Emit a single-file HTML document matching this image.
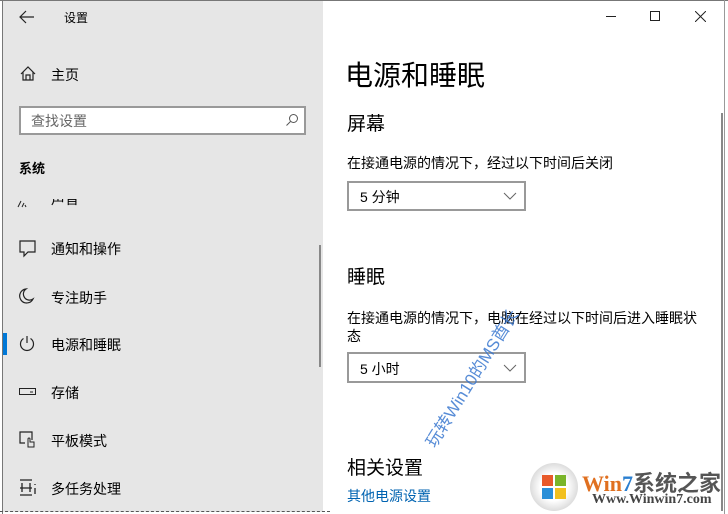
<!DOCTYPE html>
<html><head><meta charset="utf-8"><style>
*{margin:0;padding:0;box-sizing:border-box}
body{width:728px;height:514px;background:#fff;position:relative;overflow:hidden;font-family:"Liberation Sans","Noto Sans CJK SC","Microsoft YaHei",sans-serif;color:#000}
.a{position:absolute;white-space:nowrap}
#left{left:3px;top:1px;width:320px;height:511px;background:#e6e6e6}
.it{font-size:14px}
svg{position:absolute}
</style></head><body>
<div class="a" style="left:0;top:0;width:728px;height:1px;background:#777"></div>
<div class="a" style="left:2px;top:0;width:1px;height:514px;background:#777"></div>
<div class="a" style="left:724px;top:0;width:1px;height:514px;background:#999"></div>
<div class="a" id="left"></div>
<div class="a" style="left:0;top:511px;width:330px;height:3px;border-top:1px dashed #555"></div>

<svg style="left:19px;top:10px" width="16" height="14"><path d="M1 7H15M7 1L1 7L7 13" fill="none" stroke="#222" stroke-width="1.2"/></svg>
<div class="a" style="left:64px;top:9px;font-size:12px">设置</div>

<svg style="left:20px;top:66px" width="16" height="15"><path d="M1 8L8 1L15 8M3 6V14H13V6M6 14V9H10V14" fill="none" stroke="#222" stroke-width="1.2"/></svg>
<div class="a it" style="left:51px;top:65px">主页</div>

<div class="a" style="left:19px;top:106px;width:287px;height:29px;border:2px solid #999;background:#fff"></div>
<div class="a" style="left:31px;top:111px;font-size:14px;color:#666">查找设置</div>
<svg style="left:285px;top:113px" width="14" height="14"><circle cx="8.5" cy="5.5" r="4" fill="none" stroke="#555"/><path d="M5.5 8.5L1.5 12.5" stroke="#555"/></svg>

<div class="a" style="left:19px;top:158px;font-size:13px;font-weight:bold">系统</div>
<div class="a" style="left:17px;top:199px;height:9px;overflow:hidden;width:100px"><svg style="left:0;top:0" width="14" height="9"><path d="M1 8L4 2M5 8L7 4M9 8L8 6" stroke="#222"/></svg><div style="position:absolute;left:34px;top:-10px;font-size:14px">声音</div></div>

<svg style="left:19px;top:240px" width="18" height="18"><path d="M1 1H16V12H9L5 16V12H1Z" fill="none" stroke="#222" stroke-width="1.2"/></svg>
<div class="a it" style="left:51px;top:239px">通知和操作</div>

<svg style="left:19px;top:288px" width="16" height="16"><path d="M7 1A7 7 0 1 0 14 11A6 6 0 0 1 7 1Z" fill="none" stroke="#222" stroke-width="1.2"/></svg>
<div class="a it" style="left:51px;top:288px">专注助手</div>

<div class="a" style="left:3px;top:333px;width:4px;height:22px;background:#0078d7"></div>
<svg style="left:19px;top:335px" width="16" height="17"><path d="M4.5 3.5A6.5 6.5 0 1 0 11.5 3.5M8 1V8" fill="none" stroke="#222" stroke-width="1.2"/></svg>
<div class="a it" style="left:51px;top:335px">电源和睡眠</div>

<svg style="left:19px;top:388px" width="18" height="8"><rect x="0.5" y="0.5" width="16" height="6" fill="none" stroke="#222"/><path d="M11 4H14" stroke="#222"/></svg>
<div class="a it" style="left:51px;top:383px">存储</div>

<svg style="left:19px;top:431px" width="18" height="18"><path d="M13 9V1H1V12H6" fill="none" stroke="#222" stroke-width="1.2"/><path d="M9 16V8A1 1 0 0 1 11 8V11H15V16Z" fill="none" stroke="#222"/></svg>
<div class="a it" style="left:51px;top:431px">平板模式</div>

<svg style="left:19px;top:479px" width="18" height="18"><path d="M1 1H13M1 16H13M3 4V13M11 4V13M1 9H13M16 5V6M16 9V15" fill="none" stroke="#222" stroke-width="1.3"/></svg>
<div class="a it" style="left:51px;top:479px">多任务处理</div>

<div class="a" style="left:319px;top:245px;width:2px;height:122px;background:#888"></div>

<div class="a" style="left:606px;top:16px;width:10px;height:1px;background:#222"></div>
<div class="a" style="left:650px;top:11px;width:10px;height:10px;border:1px solid #222"></div>
<svg style="left:695px;top:11px" width="11" height="11"><path d="M0 0L11 11M11 0L0 11" stroke="#222"/></svg>

<div class="a" style="left:721px;top:113px;width:2px;height:398px;background:#888"></div>

<div class="a" style="left:345px;top:54px;font-size:28px">电源和睡眠</div>
<div class="a" style="left:347px;top:109px;font-size:19px">屏幕</div>
<div class="a" style="left:347px;top:153px;font-size:14px">在接通电源的情况下，经过以下时间后关闭</div>
<div class="a" style="left:347px;top:181px;width:179px;height:30px;border:2px solid #999"></div>
<div class="a" style="left:360px;top:187px;font-size:14px">5 分钟</div>
<svg style="left:503px;top:192px" width="14" height="8"><path d="M1 1L7 7L13 1" fill="none" stroke="#666"/></svg>

<div class="a" style="left:347px;top:262px;font-size:19px">睡眠</div>
<div class="a" style="left:347px;top:308px;font-size:14px">在接通电源的情况下，电脑在经过以下时间后进入睡眠状</div>
<div class="a" style="left:347px;top:326px;font-size:14px">态</div>
<div class="a" style="left:347px;top:352px;width:179px;height:31px;border:2px solid #999"></div>
<div class="a" style="left:360px;top:359px;font-size:14px">5 小时</div>
<svg style="left:503px;top:364px" width="14" height="8"><path d="M1 1L7 7L13 1" fill="none" stroke="#666"/></svg>

<div class="a" style="left:418px;top:438px;font-size:17px;color:#3a78d0;opacity:.85;transform:rotate(-58deg);transform-origin:0 0">玩转Win10的MS酋长</div>

<div class="a" style="left:347px;top:453px;font-size:19px">相关设置</div>
<div class="a" style="left:347px;top:486px;font-size:14px;color:#0063b1">其他电源设置</div>

<div class="a" style="left:530px;top:463px;width:48px;height:48px;border-radius:50%;background:radial-gradient(circle,#fff 40%,#ddd 70%,#fff 100%)"></div>
<div class="a" style="left:542px;top:475px;width:11px;height:11px;background:#e85a2a"></div>
<div class="a" style="left:555px;top:475px;width:11px;height:11px;background:#7ab52a"></div>
<div class="a" style="left:542px;top:488px;width:11px;height:11px;background:#2a8fd8"></div>
<div class="a" style="left:555px;top:488px;width:11px;height:11px;background:#f2c01e"></div>
<div class="a" style="left:582px;top:466px;font-size:22px;font-weight:bold;font-family:'Liberation Serif',serif;color:#e07020">Win<span style="color:#2a7fd0">7</span><span style="color:#555;font-family:'Noto Sans CJK SC',sans-serif">系统之家</span></div>
<div class="a" style="left:592px;top:492px;font-size:14px;font-weight:bold;font-family:'Liberation Serif',serif;color:#444">Www.Winwin7.com</div>
</body></html>
